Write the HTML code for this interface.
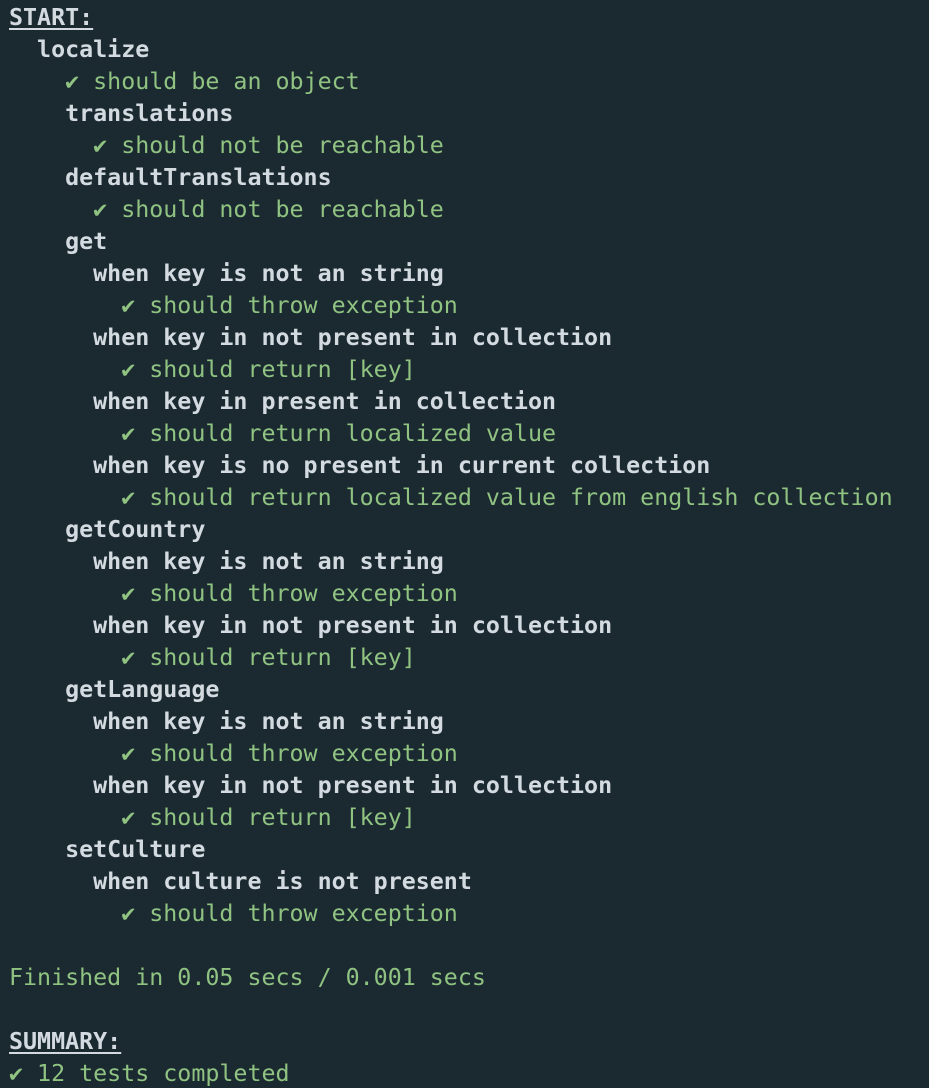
<!DOCTYPE html>
<html><head><meta charset="utf-8"><style>
html,body{margin:0;padding:0;background:#1b2a31;width:929px;height:1088px;overflow:hidden}
pre{margin:0;padding:2px 0 0 9px;font-family:"DejaVu Sans Mono","Liberation Mono",monospace;font-size:23.3px;line-height:32px;color:#d3dae0;font-weight:bold;white-space:pre}
.g{color:#90c382;font-weight:normal}
u{text-decoration:underline;text-underline-offset:3px}
</style></head><body><pre><u>START:</u>
  localize
<span class="g">    ✔ should be an object</span>
    translations
<span class="g">      ✔ should not be reachable</span>
    defaultTranslations
<span class="g">      ✔ should not be reachable</span>
    get
      when key is not an string
<span class="g">        ✔ should throw exception</span>
      when key in not present in collection
<span class="g">        ✔ should return [key]</span>
      when key in present in collection
<span class="g">        ✔ should return localized value</span>
      when key is no present in current collection
<span class="g">        ✔ should return localized value from english collection</span>
    getCountry
      when key is not an string
<span class="g">        ✔ should throw exception</span>
      when key in not present in collection
<span class="g">        ✔ should return [key]</span>
    getLanguage
      when key is not an string
<span class="g">        ✔ should throw exception</span>
      when key in not present in collection
<span class="g">        ✔ should return [key]</span>
    setCulture
      when culture is not present
<span class="g">        ✔ should throw exception</span>

<span class="g">Finished in 0.05 secs / 0.001 secs</span>

<u>SUMMARY:</u>
<span class="g">✔ 12 tests completed</span>
</pre></body></html>
